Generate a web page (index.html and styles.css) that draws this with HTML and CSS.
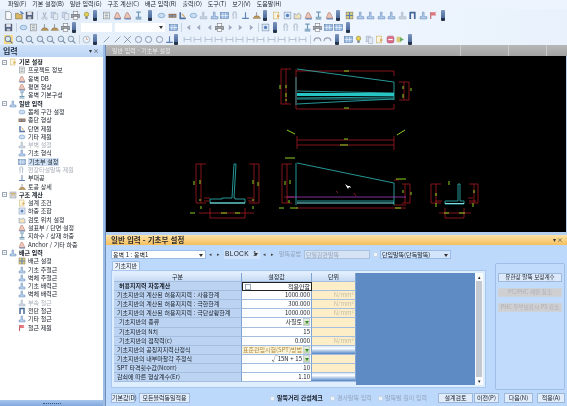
FILE: index.html

```html
<!DOCTYPE html>
<html lang="ko">
<head>
  <meta charset="UTF-8">
  <title>일반 입력 - 기초부 설정</title>
  <link rel="stylesheet" href="styles.css">
</head>
<body>
  <svg class="defs" width="0" height="0">
    <symbol id="doc" viewBox="0 0 16 16"><path d="M3 1h7l3 3v11H3z" fill="#fff" stroke="#333"/></symbol>
    <symbol id="open" viewBox="0 0 16 16"><path d="M1 14V4h5l1 2h6v8z" fill="#d9a93a" stroke="#5b4a1c"/><path d="M9 1l5 3-3 1" fill="none" stroke="#2c5aa0" stroke-width="2"/></symbol>
    <symbol id="save" viewBox="0 0 16 16"><rect x="2" y="2" width="12" height="12" fill="#2f3f70" stroke="#111"/><rect x="4" y="2" width="8" height="5" fill="#e8e8e8"/><rect x="5" y="10" width="6" height="4" fill="#bbb"/></symbol>
    <symbol id="cut" viewBox="0 0 16 16"><path d="M5 2l4 9M11 2l-4 9" stroke="#9aa4b4" stroke-width="2" fill="none"/><circle cx="5" cy="13" r="2" fill="none" stroke="#8a93a5"/><circle cx="11" cy="13" r="2" fill="none" stroke="#8a93a5"/></symbol>
    <symbol id="copy" viewBox="0 0 16 16"><rect x="2" y="2" width="8" height="10" fill="#c7d3e6" stroke="#8c9ab3"/><rect x="6" y="5" width="8" height="10" fill="#e2e8f2" stroke="#8c9ab3"/></symbol>
    <symbol id="print" viewBox="0 0 16 16"><rect x="4" y="1" width="8" height="5" fill="#fff" stroke="#555"/><rect x="1" y="6" width="14" height="6" fill="#8b8f98" stroke="#444"/><rect x="4" y="10" width="8" height="5" fill="#fff" stroke="#555"/></symbol>
    <symbol id="bulb" viewBox="0 0 16 16"><circle cx="8" cy="6" r="4" fill="#e3c51e" stroke="#6b6210"/><rect x="6" y="10" width="4" height="4" fill="#55606e"/></symbol>
    <symbol id="sheet" viewBox="0 0 16 16"><rect x="3" y="2" width="10" height="12" fill="#f5f0dc" stroke="#55606e"/><path d="M5 5h6M5 8h6M5 11h6" stroke="#3a5f94"/></symbol>
    <symbol id="road" viewBox="0 0 16 16"><path d="M2 13L6 3h3l5 10z" fill="#e6b9a6" stroke="#a5482f"/><path d="M3 14h11" stroke="#2c5aa0" stroke-width="2"/></symbol>
    <symbol id="frame" viewBox="0 0 16 16"><path d="M4 2h8M8 2v9M3 11h10M3 14h10" stroke="#4a7ca0" stroke-width="2" fill="none"/></symbol>
    <symbol id="wall" viewBox="0 0 16 16"><path d="M6 2h3v8h5v4H2v-4h4z" fill="#a9c6e6" stroke="#3a68a4"/></symbol>
    <symbol id="wall2" viewBox="0 0 16 16"><path d="M6 2h3v8h5v4H2v-4h4z" fill="#c0cbd9" stroke="#8fa0b6"/></symbol>
    <symbol id="oval" viewBox="0 0 16 16"><ellipse cx="8" cy="8" rx="6" ry="4" fill="#bfd6ee" stroke="#3874ad"/></symbol>
    <symbol id="prof" viewBox="0 0 16 16"><path d="M1 5h14v7H1z" fill="#7b5130"/><path d="M3 7h3v3H3zM9 7h4v3H9z" fill="#5d86c0"/></symbol>
    <symbol id="sect" viewBox="0 0 16 16"><path d="M4 2v11h10" stroke="#27518e" stroke-width="3" fill="none"/><path d="M7 5l5 6" stroke="#c98d2c" stroke-width="2"/></symbol>
    <symbol id="grid" viewBox="0 0 16 16"><rect x="1" y="3" width="14" height="10" fill="#7fa8d8" stroke="#24508c"/><path d="M1 8h14M5 3v10M10 3v10" stroke="#fff"/></symbol>
    <symbol id="pile" viewBox="0 0 16 16"><path d="M4 2v12M9 2v12M4 2h5M2 6h3M8 6h3" stroke="#a9b8c9" stroke-width="2" fill="none"/></symbol>
    <symbol id="tee" viewBox="0 0 16 16"><path d="M8 2v11M2 13h12" stroke="#3a63a0" stroke-width="2"/></symbol>
    <symbol id="dig" viewBox="0 0 16 16"><path d="M8 2v7" stroke="#888" stroke-width="2"/><path d="M2 13l3-4h7l3 4z" fill="#b5822b" stroke="#6b4a14"/></symbol>
    <symbol id="calc" viewBox="0 0 16 16"><rect x="2" y="2" width="12" height="12" fill="#c9cfd8" stroke="#6f7784"/><path d="M4 5h8M4 8h3M9 8h3" stroke="#c5902b" stroke-width="2"/></symbol>
    <symbol id="cond" viewBox="0 0 16 16"><rect x="3" y="2" width="9" height="12" fill="#fff6d8" stroke="#b99637"/><path d="M9 6l5 3-5 3" fill="#d88e1c"/></symbol>
    <symbol id="load" viewBox="0 0 16 16"><rect x="2" y="2" width="12" height="12" fill="#dfe7f2" stroke="#4f6f9f"/><circle cx="8" cy="8" r="3" fill="#2b64b0"/></symbol>
    <symbol id="pos" viewBox="0 0 16 16"><path d="M2 14V4l4 3 4-3 4 3v7z" fill="#f3dca8" stroke="#3a6aa5"/></symbol>
    <symbol id="rebar" viewBox="0 0 16 16"><rect x="2" y="2" width="12" height="12" fill="#d8c25a" stroke="#5a5020"/><path d="M2 8h12M8 2v12" stroke="#2e5d9a" stroke-width="2"/></symbol>
    <symbol id="arch" viewBox="0 0 16 16"><path d="M4 14V3h8v11" stroke="#153f7a" stroke-width="3" fill="none"/></symbol>
    <symbol id="flag" viewBox="0 0 16 16"><path d="M3 14V2" stroke="#a83a3a" stroke-width="2"/><path d="M3 2h10l-2 3 2 3H3z" fill="#d9525c"/></symbol>
    <symbol id="mag" viewBox="0 0 16 16"><circle cx="7" cy="7" r="5" fill="#dbe8f4" stroke="#56708e" stroke-width="1.6"/><path d="M10 10l5 5" stroke="#56708e" stroke-width="2"/></symbol>
    <symbol id="clock" viewBox="0 0 16 16"><circle cx="8" cy="8" r="6" fill="#eef3f9" stroke="#6b7c92"/><path d="M8 4v4h3" stroke="#c05b30" fill="none"/></symbol>
    <symbol id="slash" viewBox="0 0 16 16"><path d="M3 13L13 3" stroke="#4a5f80" stroke-width="1.3"/></symbol>
    <symbol id="cross" viewBox="0 0 16 16"><path d="M2 14L14 2M2 2l12 12" stroke="#4a5f80" stroke-width="1.3"/></symbol>
    <symbol id="ring" viewBox="0 0 16 16"><circle cx="8" cy="8" r="5.5" fill="none" stroke="#4a5f80" stroke-width="1.3"/></symbol>
    <symbol id="dim" viewBox="0 0 16 16"><path d="M2 3v10M14 3v10M2 8h12" stroke="#9fb0c6" stroke-width="1.6"/></symbol>
    <symbol id="left" viewBox="0 0 16 16"><path d="M11 3L5 8l6 5z" fill="#8997ad"/></symbol>
    <symbol id="right" viewBox="0 0 16 16"><path d="M5 3l6 5-6 5z" fill="#8997ad"/></symbol>
    <symbol id="undo" viewBox="0 0 16 16"><path d="M2 11a6 6 0 0 1 12 0" fill="none" stroke="#7a879b" stroke-width="2"/></symbol>
    <symbol id="go" viewBox="0 0 16 16"><rect x="1" y="3" width="8" height="10" fill="#d8c25a"/><path d="M7 4l7 4-7 4z" fill="#3f9a3a"/></symbol>
    <symbol id="stop" viewBox="0 0 16 16"><rect x="2" y="2" width="12" height="12" rx="3" fill="#d94a6a" stroke="#8a1f3a"/><path d="M4 8h8" stroke="#fff" stroke-width="2"/></symbol>
  </svg>

  <div class="app">
    <div class="menu">
      <span>파일(F)</span><span>기본 설정(B)</span><span>일반 입력(G)</span><span>구조 계산(C)</span><span>배근 입력(R)</span><span>출력(O)</span><span>도구(T)</span><span>보기(V)</span><span>도움말(H)</span>
    </div>

    <div class="toolbar">
      <svg class="i"><use href="#doc"/></svg><svg class="i"><use href="#open"/></svg><svg class="i"><use href="#save"/></svg>
      <b class="sep"></b>
      <svg class="i"><use href="#cut"/></svg><svg class="i"><use href="#copy"/></svg><svg class="i"><use href="#copy"/></svg><svg class="i"><use href="#print"/></svg><svg class="i"><use href="#bulb"/></svg>
      <b class="grip"></b>
      <svg class="i"><use href="#sheet"/></svg><svg class="i"><use href="#road"/></svg><svg class="i"><use href="#road"/></svg><svg class="i"><use href="#frame"/></svg>
      <b class="grip wide"></b>
      <svg class="i"><use href="#oval"/></svg><svg class="i"><use href="#prof"/></svg><svg class="i"><use href="#sect"/></svg><svg class="i"><use href="#oval"/></svg><svg class="i"><use href="#wall2"/></svg><svg class="i"><use href="#wall"/></svg><svg class="i"><use href="#grid"/></svg><svg class="i"><use href="#pile"/></svg><svg class="i"><use href="#tee"/></svg><svg class="i"><use href="#dig"/></svg>
      <b class="grip"></b>
      <svg class="i"><use href="#cond"/></svg><svg class="i"><use href="#load"/></svg><svg class="i"><use href="#pos"/></svg><svg class="i"><use href="#road"/></svg><svg class="i"><use href="#frame"/></svg><svg class="i"><use href="#road"/></svg>
      <b class="grip"></b>
      <svg class="i"><use href="#rebar"/></svg><svg class="i"><use href="#wall"/></svg><svg class="i"><use href="#wall"/></svg><svg class="i"><use href="#wall"/></svg><svg class="i"><use href="#wall"/></svg><svg class="i"><use href="#wall2"/></svg><svg class="i"><use href="#arch"/></svg><svg class="i"><use href="#wall"/></svg><svg class="i"><use href="#flag"/></svg>
      <b class="grip"></b>
    </div>

    <div class="toolbar">
      <svg class="i"><use href="#save"/></svg>
      <b class="sep"></b>
      <svg class="i"><use href="#oval"/></svg><svg class="i"><use href="#sheet"/></svg><svg class="i"><use href="#dig"/></svg><svg class="i"><use href="#dig"/></svg><svg class="i"><use href="#print"/></svg>
      <b class="grip"></b>
      <div class="tb-input short"></div>
      <div class="tb-input long"><em class="arrow"></em></div>
      <svg class="i"><use href="#grid"/></svg>
      <b class="sep"></b>
      <svg class="i"><use href="#left"/></svg><svg class="i"><use href="#left"/></svg><svg class="i"><use href="#left"/></svg><svg class="i"><use href="#print"/></svg><svg class="i"><use href="#right"/></svg><svg class="i"><use href="#right"/></svg><svg class="i"><use href="#right"/></svg>
      <b class="sep"></b>
      <svg class="i"><use href="#load"/></svg>
      <b class="grip"></b>
      <svg class="i"><use href="#pile"/></svg><svg class="i"><use href="#pile"/></svg><svg class="i"><use href="#frame"/></svg><svg class="i"><use href="#print"/></svg><svg class="i"><use href="#grid"/></svg><svg class="i"><use href="#grid"/></svg>
      <b class="grip"></b>
    </div>

    <div class="toolbar">
      <svg class="i on"><use href="#mag"/></svg><svg class="i"><use href="#mag"/></svg><svg class="i"><use href="#mag"/></svg><svg class="i"><use href="#mag"/></svg><svg class="i"><use href="#mag"/></svg><svg class="i"><use href="#mag"/></svg><svg class="i"><use href="#mag"/></svg>
      <b class="sep"></b>
      <svg class="i"><use href="#clock"/></svg>
      <b class="grip"></b>
      <svg class="i"><use href="#slash"/></svg><svg class="i"><use href="#slash"/></svg><svg class="i"><use href="#cross"/></svg><svg class="i"><use href="#ring"/></svg><svg class="i"><use href="#ring"/></svg><svg class="i"><use href="#ring"/></svg><svg class="i"><use href="#tee"/></svg>
      <b class="grip narrow"></b>
      <svg class="i"><use href="#dim"/></svg><svg class="i"><use href="#dim"/></svg><svg class="i"><use href="#dim"/></svg><svg class="i"><use href="#dim"/></svg><svg class="i"><use href="#dim"/></svg><svg class="i"><use href="#dim"/></svg><svg class="i"><use href="#dim"/></svg><svg class="i"><use href="#dim"/></svg><svg class="i"><use href="#dim"/></svg><svg class="i"><use href="#dim"/></svg><svg class="i"><use href="#dim"/></svg><svg class="i"><use href="#dim"/></svg>
      <b class="sep"></b>
      <svg class="i"><use href="#undo"/></svg><svg class="i"><use href="#undo"/></svg>
      <b class="grip"></b>
      <svg class="i"><use href="#grid"/></svg><svg class="i"><use href="#bulb"/></svg><svg class="i"><use href="#copy"/></svg><svg class="i"><use href="#cond"/></svg><svg class="i"><use href="#stop"/></svg><svg class="i"><use href="#go"/></svg>
      <b class="grip"></b>
    </div>

    <div class="main">
      <div class="side">
        <div class="side-head"><strong>입력</strong><span class="pins">▾ ×</span></div>
        <div class="tree">
          <div class="node"><i class="box">−</i><svg class="i"><use href="#cond"/></svg>기본 설정</div>
          <div class="leaf"><svg class="i"><use href="#sheet"/></svg>프로젝트 정보</div>
          <div class="leaf"><svg class="i"><use href="#road"/></svg>옹벽 DB</div>
          <div class="leaf"><svg class="i"><use href="#road"/></svg>평면 형상</div>
          <div class="leaf"><svg class="i"><use href="#frame"/></svg>옹벽 기본구성</div>
          <div class="node"><i class="box">−</i><svg class="i"><use href="#wall"/></svg>일반 입력</div>
          <div class="leaf"><svg class="i"><use href="#oval"/></svg>몸체 구간 설정</div>
          <div class="leaf"><svg class="i"><use href="#prof"/></svg>종단 형상</div>
          <div class="leaf"><svg class="i"><use href="#sect"/></svg>단면 제원</div>
          <div class="leaf"><svg class="i"><use href="#oval"/></svg>기타 제원</div>
          <div class="leaf off"><svg class="i"><use href="#wall2"/></svg>부벽 설정</div>
          <div class="leaf"><svg class="i"><use href="#wall"/></svg>기초 형식</div>
          <div class="leaf sel"><svg class="i"><use href="#grid"/></svg><span>기초부 설정</span></div>
          <div class="leaf off"><svg class="i"><use href="#pile"/></svg>현장타설말뚝 제원</div>
          <div class="leaf"><svg class="i"><use href="#tee"/></svg>부대공</div>
          <div class="leaf"><svg class="i"><use href="#dig"/></svg>토공 상세</div>
          <div class="node"><i class="box">−</i><svg class="i"><use href="#calc"/></svg>구조 계산</div>
          <div class="leaf"><svg class="i"><use href="#cond"/></svg>설계 조건</div>
          <div class="leaf"><svg class="i"><use href="#load"/></svg>하중 조합</div>
          <div class="leaf"><svg class="i"><use href="#pos"/></svg>검토 위치 설정</div>
          <div class="leaf"><svg class="i"><use href="#road"/></svg>설표부 / 단면 설정</div>
          <div class="leaf"><svg class="i"><use href="#frame"/></svg>지하수 / 상재 하중</div>
          <div class="leaf"><svg class="i"><use href="#road"/></svg>Anchor / 기타 하중</div>
          <div class="node"><i class="box">−</i><svg class="i"><use href="#wall"/></svg>배근 입력</div>
          <div class="leaf"><svg class="i"><use href="#rebar"/></svg>배근 설정</div>
          <div class="leaf"><svg class="i"><use href="#wall"/></svg>기초 주철근</div>
          <div class="leaf"><svg class="i"><use href="#wall"/></svg>벽체 주철근</div>
          <div class="leaf"><svg class="i"><use href="#wall"/></svg>기초 배력근</div>
          <div class="leaf"><svg class="i"><use href="#wall"/></svg>벽체 배력근</div>
          <div class="leaf off"><svg class="i"><use href="#wall2"/></svg>부속 철근</div>
          <div class="leaf"><svg class="i"><use href="#arch"/></svg>전단 철근</div>
          <div class="leaf"><svg class="i"><use href="#wall"/></svg>기타 철근</div>
          <div class="leaf"><svg class="i"><use href="#flag"/></svg>철근 제원</div>
        </div>
        <div class="side-foot"><span></span></div>
      </div>

      <div class="work">
        <div class="win-title">
          <span class="win-name">일반 입력 - 기초부 설정</span>
          <span class="win-tab t1"></span><span class="win-tab t2"></span><span class="win-tab t3"></span>
        </div>
        <svg class="cad" viewBox="107 56 460 176" preserveAspectRatio="none">
          <g fill="none" stroke="#a51a22" stroke-width="0.8">
            <path d="M292 69h-10v35h10M287 69v35M297 69v40h98v-5M297 71h98v5"/>
            <path d="M400 82h10v18h-10M405 82v18"/>
            <path d="M298 136v13M395 136v14M298 140h97M298 145h97"/>
            <path d="M293 164h-10v39h10M288 164v39M297 208h110M403 184h8v19h-8M406 184v19M395 180h5M395 205h12"/>
            <path d="M207 164h-10v39h10M202 164v39M250 164h10v39h-10M255 164v39M211 208v10h35v-10M200 213h55"/>
            <path d="M442 184h-10v19h10M437 184v19M470 184h9v19h-9M475 184v19M446 208v10h19v-10M440 213h32"/>
            <path d="M205 198h6M205 201h5M248 198h6M249 201h5M285 197h10M436 201h7M470 201h7M474 198h-5"/>
            <path d="M337 191l2 2M355 193l2 3"/>
          </g>
          <g fill="none" stroke="#2aa7a8" stroke-width="0.9">
            <path d="M298 69L395 82v18M297 77v28M298 104l37-2 60-3"/>
            <path d="M298 91l97 2M298 98l97-1M298 99h97"/>
            <path d="M298 163l97 20v22M297 163v42M298 201h97"/>
            <path d="M237 164h-2l-2 34h-10v1h-12v4h35v-4h-10v-1h-1z"/>
            <path d="M459 184h2v17h4v3h-19v-3h13z"/>
          </g>
          <path d="M298 94.5h97" stroke="#27c4c4" stroke-width="3" fill="none"/>
          <path d="M298 203h97" stroke="#7fe6e6" stroke-width="1" fill="none"/>
          <path d="M211 203h35M446 203.5h19" stroke="#8ff0f0" stroke-width="0.9" fill="none"/>
          <path d="M288 197h119" stroke="#a33cc0" stroke-width="0.8" fill="none"/>
          <g fill="none" stroke="#8ad022" stroke-width="1">
            <path d="M287 85v3M281 85v4M287 93v4M287 99v2M404 86v3M404 94v4M412 88v3"/>
            <path d="M288 130l8 4M398 135l8-5M286 158h10M345 139h4M341 145h8M345 71h5M345 108h5"/>
            <path d="M195 181v4M201 180v4M254 180v4M259 182v4M286 181v4M291 180v4M450 181v4M437 193v3M475 190v3M404 190v3M412 192v3M191 213h5M222 213h6M236 213h5M445 213h5M460 213h6"/>
            <path d="M201 199v2M254 199v2M290 200v3M280 208h5M291 208h8M396 208h6M397 179h10M437 203v4M474 203v4M202 206v3M254 206v3"/>
          </g>
          <path d="M346 184l3 5 1-2 2 1-1-2h-2z" fill="#fff"/>
        </svg>

        <div class="dock">
          <div class="dock-title"><strong>일반 입력 - 기초부 설정</strong><span class="pins">▾ ×</span></div>
          <div class="combos">
            <div class="combo c1">옹벽 1 : 옹벽1<em class="arrow"></em></div>
            <span class="step">◂</span><span class="step">▸</span>
            <div class="combo c2">BLOCK&nbsp;&nbsp;1<em class="arrow"></em></div>
            <span class="step">◂</span><span class="step">▸</span>
            <span class="faded lbl">말뚝공법</span>
            <div class="combo c3 faded">단일강관말뚝</div>
            <i class="check small"></i>
            <div class="combo c4">단입말뚝(단독말뚝)<em class="arrow"></em></div>
          </div>
          <div class="dock-main">
            <div class="sheet-col">
              <div class="tab">기초지반</div>
              <div class="sheet-box">
                <div class="sheet">
                  <div class="rows">
                    <div class="h">구분</div><div class="h">설정값</div><div class="h">단위</div>
                    <div class="l bold">허용지지력 자동계산</div><div class="v act"><i class="check"></i>적용안함</div><div class="u"></div>
                    <div class="l">기초지반의 계산된 허용지지력 : 사용한계</div><div class="v">1000.000</div><div class="u">N/mm²</div>
                    <div class="l">기초지반의 계산된 허용지지력 : 극한한계</div><div class="v">300.000</div><div class="u">N/mm²</div>
                    <div class="l">기초지반의 계산된 허용지지력 : 극단상황한계</div><div class="v">1000.000</div><div class="u">N/mm²</div>
                    <div class="l ind">기초지반의 종류</div><div class="v">사질토<em class="drop"></em></div><div class="u"></div>
                    <div class="l ind">기초지반의 N치</div><div class="v">15</div><div class="u"></div>
                    <div class="l ind">기초지반의 점착력(c)</div><div class="v">0.000</div><div class="u">N/mm²</div>
                    <div class="l">기초지반의 공칭지지력산정식</div><div class="v tint">표준관입시험(SPT)방법<em class="drop"></em></div><div class="u btn"></div>
                    <div class="l">기초지반의 내부마찰각 추정식</div><div class="v">√15N + 15<em class="drop"></em></div><div class="u"></div>
                    <div class="l">SPT 타격횟수값(Ncorr)</div><div class="v">10</div><div class="u"></div>
                    <div class="l">감쇠에 따른 형상계수(Er)</div><div class="v">1.10</div><div class="u btn"></div>
                  </div>
                  <div class="empty"></div>
                  <div class="scroll"><span class="s-btn">▴</span><span class="s-track"></span><span class="s-btn">▾</span></div>
                </div>
              </div>
            </div>
            <div class="side-box">
              <button class="tool on">유한장 말뚝 보정계수</button>
              <button class="tool">PC/PHC 제원 참조</button>
              <button class="tool">PHC 두부보강시 PS 감소</button>
            </div>
          </div>
          <div class="actions">
            <button class="act-btn b1">기본값(D)</button>
            <button class="act-btn b2">모든블럭동일적용</button>
            <label class="opt o1"><i class="check small"></i>말뚝거리 간섭체크</label>
            <label class="opt o2 faded"><i class="check small"></i>경사말뚝 입력</label>
            <label class="opt o3 faded"><i class="check small"></i>말뚝별 길이 입력</label>
            <button class="act-btn b3">설계검토</button>
            <button class="act-btn b4">이전(P)</button>
            <button class="act-btn b5">다음(N)</button>
            <button class="act-btn b6">적용(A)</button>
          </div>
        </div>
      </div>
    </div>
  </div>
</body>
</html>
```

FILE: styles.css

```css
* {
  box-sizing: border-box;
}

body {
  margin: 0;
  font-family: "Noto Sans CJK KR", "Liberation Sans", sans-serif;
  font-size: 6px;
  line-height: 8px;
  color: #161c26;
  overflow: hidden;
}

.defs {
  position: absolute;
}

.app {
  width: 567px;
  height: 406px;
  display: flex;
  flex-direction: column;
  background: #e9f2fc;
  overflow: hidden;
  filter: blur(0.3px);
}

.menu {
  height: 9px;
  padding-left: 8px;
  display: flex;
  gap: 5.8px;
  white-space: nowrap;
  background: #edf4fd;
}

.toolbar {
  height: 12px;
  padding-left: 4px;
  display: flex;
  align-items: center;
  background: linear-gradient(90deg, #e2edf9, #eef5fe 60%, #e9f2fc);
}

.i {
  width: 9px;
  height: 9px;
  margin-right: 1.5px;
  flex: none;
  opacity: 0.78;
}

.i.on {
  background: #f4d98c;
  opacity: 1;
}

.sep {
  width: 1px;
  height: 9px;
  margin: 0 2px 0 1px;
  background: #c3d0e0;
  flex: none;
}

.grip {
  width: 4px;
  height: 11px;
  margin: 0 5px 0 1px;
  flex: none;
  border-radius: 1px;
  background: linear-gradient(#7d97c0, #4c6a9c);
  border-bottom: 3px solid #26344a;
}

.grip.wide {
  margin-left: 4px;
}

.grip.narrow {
  margin: 0 5px 0 -2px;
}

.tb-input {
  height: 9px;
  background: #fff;
  position: relative;
  flex: none;
}

.tb-input.short {
  width: 31px;
  margin-right: 3px;
}

.tb-input.long {
  width: 50px;
  margin-right: 4px;
}

.arrow {
  position: absolute;
  right: 2px;
  top: 3px;
  border: 2px solid transparent;
  border-top: 3px solid #333;
}

.main {
  flex: 1;
  display: flex;
  min-height: 0;
}

.side {
  width: 105px;
  flex: none;
  display: flex;
  flex-direction: column;
  background: #fff;
  border-right: 2px solid #9dbce6;
}

.side-head {
  height: 12px;
  padding: 0 3px;
  display: flex;
  align-items: center;
  justify-content: space-between;
  background: linear-gradient(#cfe2fa, #bcd5f5);
  font-size: 8px;
  color: #1f2a3a;
}

.pins {
  font-size: 6px;
  color: #333;
  padding-right: 1px;
}

.tree {
  flex: 1;
  padding-top: 1px;
  min-height: 0;
}

.node,
.leaf {
  height: 8.3px;
  display: flex;
  align-items: center;
  white-space: nowrap;
}

.node {
  padding-left: 2px;
  font-weight: 700;
}

.leaf {
  padding-left: 18px;
}

.node .i,
.leaf .i {
  width: 8px;
  height: 8px;
  margin-right: 2px;
}

.box {
  width: 5px;
  height: 5px;
  margin-right: 2px;
  border: 1px solid #9aa7b8;
  font-style: normal;
  font-size: 4px;
  line-height: 3px;
  text-align: center;
  color: #555;
  flex: none;
}

.leaf.off {
  color: #a9b0ba;
}

.leaf.sel span {
  background: #cfe0f5;
  padding: 0 1px;
}

.side-foot {
  height: 6px;
  background: linear-gradient(#a9c7ee, #7fa6dc);
  display: flex;
  justify-content: center;
  align-items: center;
}

.side-foot span {
  width: 18px;
  border-top: 1px dotted #33527f;
}

.work {
  flex: 1;
  min-width: 0;
  display: flex;
  flex-direction: column;
  border-left: 1px solid #6f8fb8;
  background: #b5cfef;
}

.win-title {
  height: 11px;
  display: flex;
  align-items: center;
  padding-left: 6px;
  background: linear-gradient(#b7b7b7, #a3a3a3);
  color: #e8e8e8;
}

.win-name {
  width: 348px;
  flex: none;
}

.win-tab {
  height: 11px;
  border-left: 1px solid #c9c9c9;
  flex: none;
}

.t1 {
  width: 48px;
}

.t2 {
  width: 38px;
}

.cad {
  display: block;
  width: 460px;
  height: 176px;
  background: #000;
  flex: none;
  margin-bottom: 3px;
}

.dock {
  flex: 1;
  min-height: 0;
  background: #bcd8fb;
}

.dock-title {
  height: 10px;
  padding: 0 3px 0 5px;
  display: flex;
  align-items: center;
  justify-content: space-between;
  font-size: 7.5px;
  color: #2b2b2b;
  background: linear-gradient(#fde3a8, #f6bf5c);
}

.combos {
  height: 10px;
  margin-top: 4px;
  padding-left: 5px;
  display: flex;
  align-items: center;
}

.combo {
  height: 9px;
  line-height: 7px;
  padding-left: 1px;
  position: relative;
  flex: none;
  white-space: nowrap;
}

.c1 {
  width: 95px;
  background: #fff;
  border: 1px solid #9bbce6;
}

.c2 {
  width: 36px;
  margin-left: 2px;
  font-family: "Liberation Sans", sans-serif;
  font-size: 6.6px;
  letter-spacing: 0.3px;
  background: #cfe2fa;
}

.c3 {
  width: 66px;
  margin-left: 3px;
  background: #d6e3f4;
  border: 1px solid #a9c0de;
}

.c4 {
  width: 71px;
  margin-left: 2px;
  background: #d3e5fb;
  border: 1px solid #9bbce6;
}

.step {
  width: 8px;
  text-align: center;
  font-size: 5px;
  color: #444;
  flex: none;
}

.lbl {
  width: 22px;
  margin-left: 3px;
  flex: none;
  white-space: nowrap;
}

.faded {
  color: #94a5bb;
}

.dock-main {
  display: flex;
  padding-left: 5px;
  height: 127px;
  margin-top: 2px;
}

.sheet-col {
  width: 375px;
  flex: none;
}

.tab {
  width: 28px;
  height: 9px;
  margin-left: 1px;
  text-align: center;
  background: #eaf3fd;
  border: 1px solid #9bbce6;
  border-bottom: 0;
  border-radius: 2px 2px 0 0;
}

.sheet-box {
  height: 118px;
  padding: 2px;
  background: #dfeeff;
  border: 1px solid #a9c7ee;
}

.sheet {
  display: flex;
  height: 112px;
}

.rows {
  width: 242px;
  flex: none;
  display: grid;
  grid-template-columns: 128px 70px 44px;
  grid-auto-rows: 9.1px;
  align-content: start;
}

.rows > div {
  border-right: 1px solid #7ea3d2;
  border-bottom: 1px solid #a3bedf;
  white-space: nowrap;
  overflow: hidden;
  position: relative;
}

.h {
  text-align: center;
  background: linear-gradient(#e4effc, #c5daf4);
}

.l {
  padding-left: 3px;
  background: #bcd4f2;
}

.ind {
  padding-left: 5px;
}

.bold {
  padding-left: 5px;
  font-weight: 700;
}

.v {
  padding-right: 1px;
  text-align: right;
  background: #fff;
}

.v.act {
  border: 1px solid #222;
}

.v.tint {
  background: #fdf3d8;
  color: #a88a40;
}

.u {
  text-align: right;
  padding-right: 1px;
  background: #fdeec8;
  color: #c3bda8;
}

.u.btn {
  background: linear-gradient(180deg, #d5e5f8, #fff 30%, #4f84c6);
}

.v .check {
  position: absolute;
  left: 2px;
  top: 1px;
}

.drop {
  float: right;
  width: 7px;
  height: 8px;
  margin-left: 1px;
  background: linear-gradient(#e8f0e0, #bcd4a8);
  border: 1px solid #c5d1dc;
  position: relative;
}

.drop::after {
  content: "";
  position: absolute;
  left: 1px;
  top: 2px;
  border: 2px solid transparent;
  border-top: 3px solid #3e8a2c;
}

.check {
  display: inline-block;
  width: 6px;
  height: 6px;
  background: #fff;
  border: 1px solid #98a9bd;
  flex: none;
}

.check.small {
  width: 5px;
  height: 5px;
  margin-right: 2px;
  background: #eef4fb;
  border-color: #c7d6e8;
}

.combos .check.small {
  margin: 0 0 0 3px;
}

.empty {
  width: 119px;
  flex: none;
  background: #5f8bc4;
}

.scroll {
  width: 8px;
  flex: none;
  display: flex;
  flex-direction: column;
  background: #f3f6fa;
}

.s-btn {
  height: 8px;
  font-size: 5px;
  line-height: 7px;
  text-align: center;
  color: #222;
  background: #fafbfd;
}

.s-track {
  flex: 1;
  margin: 0 1px;
  background: #c4c9d1;
}

.side-box {
  width: 70px;
  height: 127px;
  margin: 2px 0 0 9px;
  padding: 9px 2px 0;
  display: flex;
  flex-direction: column;
  gap: 6px;
  background: #c1dbfd;
  border: 1px solid #9fbde5;
  border-radius: 2px;
}

button {
  padding: 0;
  font: inherit;
  color: inherit;
  white-space: nowrap;
}

.tool {
  height: 9px;
  line-height: 7px;
  font-size: 5.6px;
  overflow: hidden;
  background: #cfcfd2;
  color: #aeb0b5;
  border: 1px solid #cdd3db;
}

.tool.on {
  background: #dbe9fa;
  color: #161c26;
  border-color: #9fb9dc;
}

.actions {
  margin-top: 5px;
  padding-left: 5px;
  height: 10px;
  display: flex;
  align-items: center;
}

.act-btn {
  height: 10px;
  line-height: 8px;
  background: #e1edfb;
  border: 1px solid #9fb9dc;
  flex: none;
}

.b1 {
  width: 24px;
}

.b2 {
  width: 51px;
  margin-left: 4px;
}

.b3 {
  width: 35px;
  margin-left: 1px;
}

.b4 {
  width: 25px;
  margin-left: 1px;
}

.b5 {
  width: 29px;
  margin-left: 5px;
}

.b6 {
  width: 28px;
  margin-left: 4px;
}

.opt {
  display: flex;
  align-items: center;
  white-space: nowrap;
  flex: none;
}

.o1 {
  width: 60px;
  margin-left: 80px;
  font-weight: 700;
}

.o2 {
  width: 48px;
}

.o3 {
  width: 59px;
}
```
